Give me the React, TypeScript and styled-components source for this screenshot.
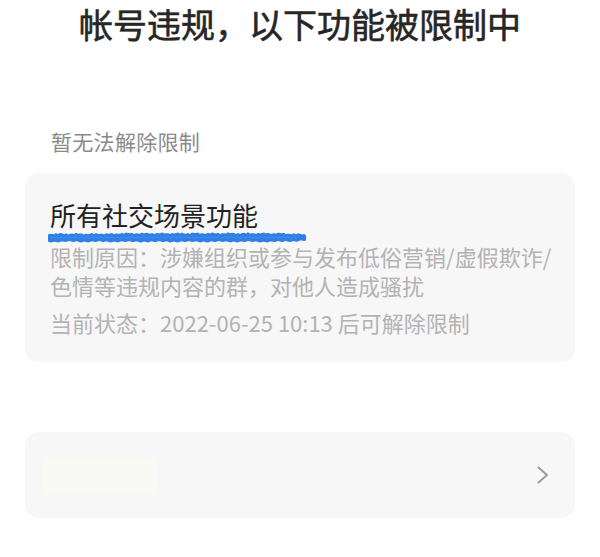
import React from "react";
import styled, { createGlobalStyle } from "styled-components";

const GlobalStyle = createGlobalStyle`
  html, body {
    margin: 0;
    padding: 0;
    background: #ffffff;
  }
  body {
    font-family: "Noto Sans CJK SC", "Noto Sans", sans-serif;
    -webkit-font-smoothing: antialiased;
  }
`;

const Page = styled.div`
  width: 600px;
  min-height: 557px;
  box-sizing: border-box;
  padding: 3px 25px 0 25px;
  display: flex;
  flex-direction: column;
`;

const Heading = styled.h1`
  margin: 0;
  font-size: 34px;
  line-height: 42px;
  font-weight: 400;
  -webkit-text-stroke: 0.6px #262626;
  color: #262626;
  text-align: center;
`;

const SectionLabel = styled.div`
  margin-top: 82px;
  padding-left: 26px;
  font-size: 21px;
  line-height: 28px;
  letter-spacing: 0.3px;
  color: #8a8a8a;
`;

const Card = styled.div`
  margin-top: 18px;
  background: #f7f7f7;
  border-radius: 14px;
  padding: 25px 16px 25px 25px;
  display: flex;
  flex-direction: column;
`;

const CardTitle = styled.div`
  font-size: 26px;
  line-height: 34px;
  color: #222222;
`;

const Marker = styled.svg`
  display: block;
  width: 262px;
  height: 11px;
  margin: 0 0 -1px -3px;
`;

const Detail = styled.p<{ $gap?: number }>`
  margin: ${(p) => p.$gap ?? 0}px 0 0 0;
  font-size: 22px;
  line-height: 29px;
  color: #b3b3b3;
`;

const EntryCard = styled.div`
  margin-top: 70px;
  height: 86px;
  background: #f7f7f7;
  border-radius: 14px;
  padding: 0 26px 0 17px;
  display: flex;
  align-items: center;
  justify-content: space-between;
`;

const Redacted = styled.div`
  width: 115px;
  height: 35px;
  background: #fafaf4;
  border-radius: 2px;
  filter: blur(1.5px);
`;

const Chevron = styled.svg`
  width: 12px;
  height: 18px;
  display: block;
`;

function BlueMarker() {
  const top: string[] = [];
  const bottom: string[] = [];
  for (let x = 1; x <= 259; x += 2) {
    const taper = x > 235 ? (x - 235) * 0.05 : 0;
    const jt = Math.sin(x * 1.9) * 0.6 + Math.sin(x * 0.37) * 0.35;
    const jb = Math.cos(x * 2.3) * 0.5 + Math.sin(x * 0.21) * 0.3;
    const lift = x < 70 ? 0.5 : 0;
    top.push(`${x},${(1.2 + taper + jt + lift).toFixed(2)}`);
    bottom.push(`${x},${(9.8 - taper + jb).toFixed(2)}`);
  }
  const d = `M${top.join(" L")} L${bottom.reverse().join(" L")} Z`;
  const streak: string[] = [];
  for (let x = 4; x <= 252; x += 3) {
    streak.push(`${x},${(5.4 + Math.sin(x * 3.1) * 0.9).toFixed(2)}`);
  }
  return (
    <Marker viewBox="0 0 262 11" aria-hidden>
      <path d={d} fill="#2f7fe6" />
      <polyline points={streak.join(" ")} fill="none" stroke="#5598ef" strokeWidth="1" opacity="0.55" />
    </Marker>
  );
}

export default function App() {
  return (
    <>
      <GlobalStyle />
      <Page>
        <Heading>帐号违规，以下功能被限制中</Heading>
        <SectionLabel>暂无法解除限制</SectionLabel>
        <Card>
          <CardTitle>所有社交场景功能</CardTitle>
          <BlueMarker />
          <Detail>限制原因：涉嫌组织或参与发布低俗营销/虚假欺诈/色情等违规内容的群，对他人造成骚扰</Detail>
          <Detail $gap={8}>当前状态：2022-06-25 10:13 后可解除限制</Detail>
        </Card>
        <EntryCard>
          <Redacted />
          <Chevron viewBox="0 0 12 18" aria-hidden>
            <polyline points="1.5,1.5 10,9 1.5,16.5" fill="none" stroke="#9c9c9c" strokeWidth="2" strokeLinecap="round" strokeLinejoin="round" />
          </Chevron>
        </EntryCard>
      </Page>
    </>
  );
}
